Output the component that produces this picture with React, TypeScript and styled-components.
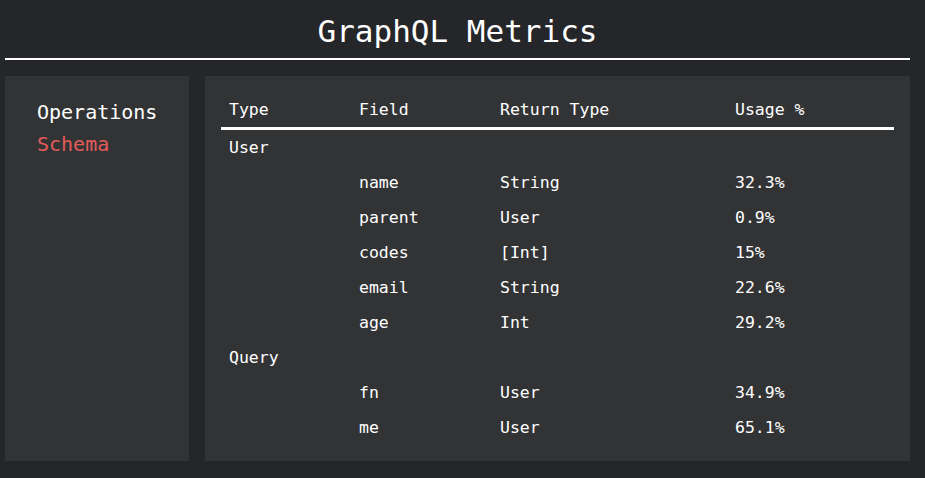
import React from "react";
import styled, { createGlobalStyle } from "styled-components";

interface FieldRow {
  field: string;
  returnType: string;
  usage: string;
}

interface TypeGroup {
  name: string;
  fields: FieldRow[];
}

const SCHEMA: TypeGroup[] = [
  {
    name: "User",
    fields: [
      { field: "name", returnType: "String", usage: "32.3%" },
      { field: "parent", returnType: "User", usage: "0.9%" },
      { field: "codes", returnType: "[Int]", usage: "15%" },
      { field: "email", returnType: "String", usage: "22.6%" },
      { field: "age", returnType: "Int", usage: "29.2%" },
    ],
  },
  {
    name: "Query",
    fields: [
      { field: "fn", returnType: "User", usage: "34.9%" },
      { field: "me", returnType: "User", usage: "65.1%" },
    ],
  },
];

const GlobalStyle = createGlobalStyle`
  html, body {
    margin: 0;
    padding: 0;
    background: #252629;
  }
  body {
    font-family: "DejaVu Sans Mono", "Liberation Mono", monospace;
    color: #ffffff;
  }
`;

const Page = styled.div`
  padding: 0 15px 17px 5px;
  width: 905px;
`;

const Title = styled.h1`
  margin: 0 0 16px;
  padding: 12px 0 8px;
  font-size: 31px;
  line-height: 38px;
  font-weight: 400;
  text-align: center;
  border-bottom: 2px solid #ffffff;
`;

const Body = styled.div`
  display: flex;
  gap: 16px;
  align-items: stretch;
`;

const Panel = styled.div`
  background: #323335;
`;

const Sidebar = styled(Panel)`
  width: 184px;
  padding: 20px 0 0 32px;
  box-sizing: border-box;
  display: flex;
  flex-direction: column;
`;

const NavLink = styled.a<{ $active?: boolean }>`
  font-size: 20px;
  line-height: 32px;
  color: ${(p) => (p.$active ? "#e35b5b" : "#ffffff")};
  text-decoration: none;
  cursor: pointer;
`;

const Main = styled(Panel)`
  flex: 1;
  padding: 16px;
`;

const Row = styled.div<{ $header?: boolean }>`
  display: grid;
  grid-template-columns: 130px 141px 235px 1fr;
  height: 35px;
  align-items: center;
  font-size: 16.5px;
  border-bottom: ${(p) => (p.$header ? "3px solid #ffffff" : "none")};
`;

const Cell = styled.div`
  padding: 0 8px;
  white-space: nowrap;
`;

const App = () => {
  return (
    <Page>
      <GlobalStyle />
      <Title>GraphQL Metrics</Title>
      <Body>
        <Sidebar>
          <NavLink>Operations</NavLink>
          <NavLink $active>Schema</NavLink>
        </Sidebar>
        <Main>
          <Row $header>
            <Cell>Type</Cell>
            <Cell>Field</Cell>
            <Cell>Return Type</Cell>
            <Cell>Usage %</Cell>
          </Row>
          {SCHEMA.map((group) => (
            <React.Fragment key={group.name}>
              <Row>
                <Cell>{group.name}</Cell>
              </Row>
              {group.fields.map((f) => (
                <Row key={group.name + f.field}>
                  <Cell />
                  <Cell>{f.field}</Cell>
                  <Cell>{f.returnType}</Cell>
                  <Cell>{f.usage}</Cell>
                </Row>
              ))}
            </React.Fragment>
          ))}
        </Main>
      </Body>
    </Page>
  );
};

export default App;
